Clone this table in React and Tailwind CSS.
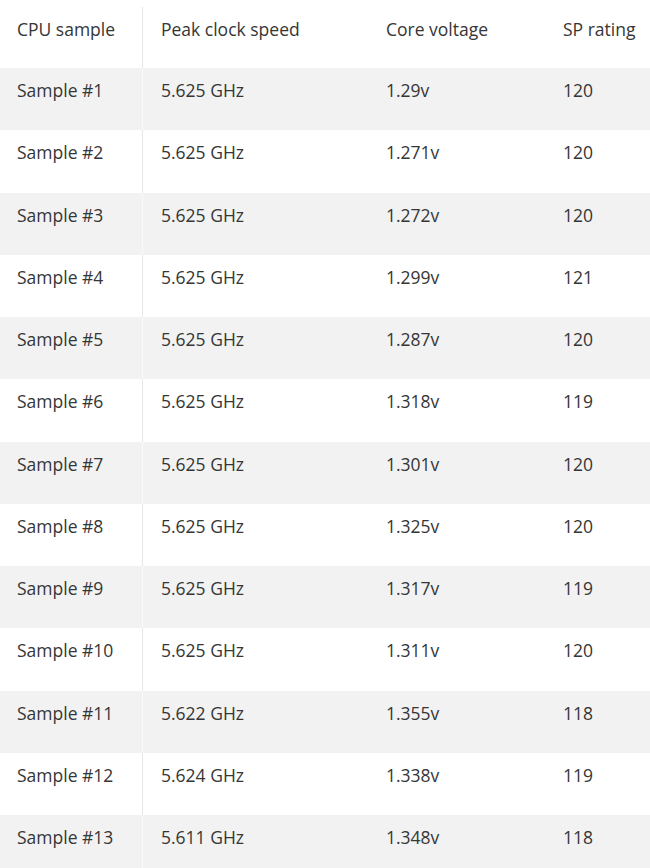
import React from 'react';

const ROWS = [
  ['Sample #1', '5.625 GHz', '1.29v', '120'],
  ['Sample #2', '5.625 GHz', '1.271v', '120'],
  ['Sample #3', '5.625 GHz', '1.272v', '120'],
  ['Sample #4', '5.625 GHz', '1.299v', '121'],
  ['Sample #5', '5.625 GHz', '1.287v', '120'],
  ['Sample #6', '5.625 GHz', '1.318v', '119'],
  ['Sample #7', '5.625 GHz', '1.301v', '120'],
  ['Sample #8', '5.625 GHz', '1.325v', '120'],
  ['Sample #9', '5.625 GHz', '1.317v', '119'],
  ['Sample #10', '5.625 GHz', '1.311v', '120'],
  ['Sample #11', '5.622 GHz', '1.355v', '118'],
  ['Sample #12', '5.624 GHz', '1.338v', '119'],
  ['Sample #13', '5.611 GHz', '1.348v', '118'],
];

const GRID = 'grid grid-cols-[143px_225px_177px_1fr]';

export default function App() {
  return (
    <div className="w-[650px] h-[868px] overflow-hidden bg-white text-[#363636] text-[17.5px] leading-6 font-['Open_Sans',sans-serif]">
      {/* Header */}
      <div className={`${GRID} h-[68px]`}>
        <div className="pt-[7px]">
          <div className="h-full border-r border-[#e6e6e6] pl-[17px] pt-[10px]">CPU sample</div>
        </div>
        <div className="pl-[18px] pt-[17px]">Peak clock speed</div>
        <div className="pl-[18px] pt-[17px]">Core voltage</div>
        <div className="pl-[18px] pt-[17px]">SP rating</div>
      </div>

      {/* Rows */}
      {ROWS.map((r, i) => (
        <div key={r[0]} className={`${GRID} h-[62.25px] ${i % 2 === 0 ? 'bg-[#f2f2f2]' : 'bg-white'}`}>
          <div className={`pl-[17px] pt-[10px] border-r ${i % 2 === 0 ? 'border-[#fafafa]' : 'border-[#e6e6e6]'}`}>{r[0]}</div>
          <div className="pl-[18px] pt-[10px]">{r[1]}</div>
          <div className="pl-[18px] pt-[10px]">{r[2]}</div>
          <div className="pl-[18px] pt-[10px]">{r[3]}</div>
        </div>
      ))}
    </div>
  );
}
